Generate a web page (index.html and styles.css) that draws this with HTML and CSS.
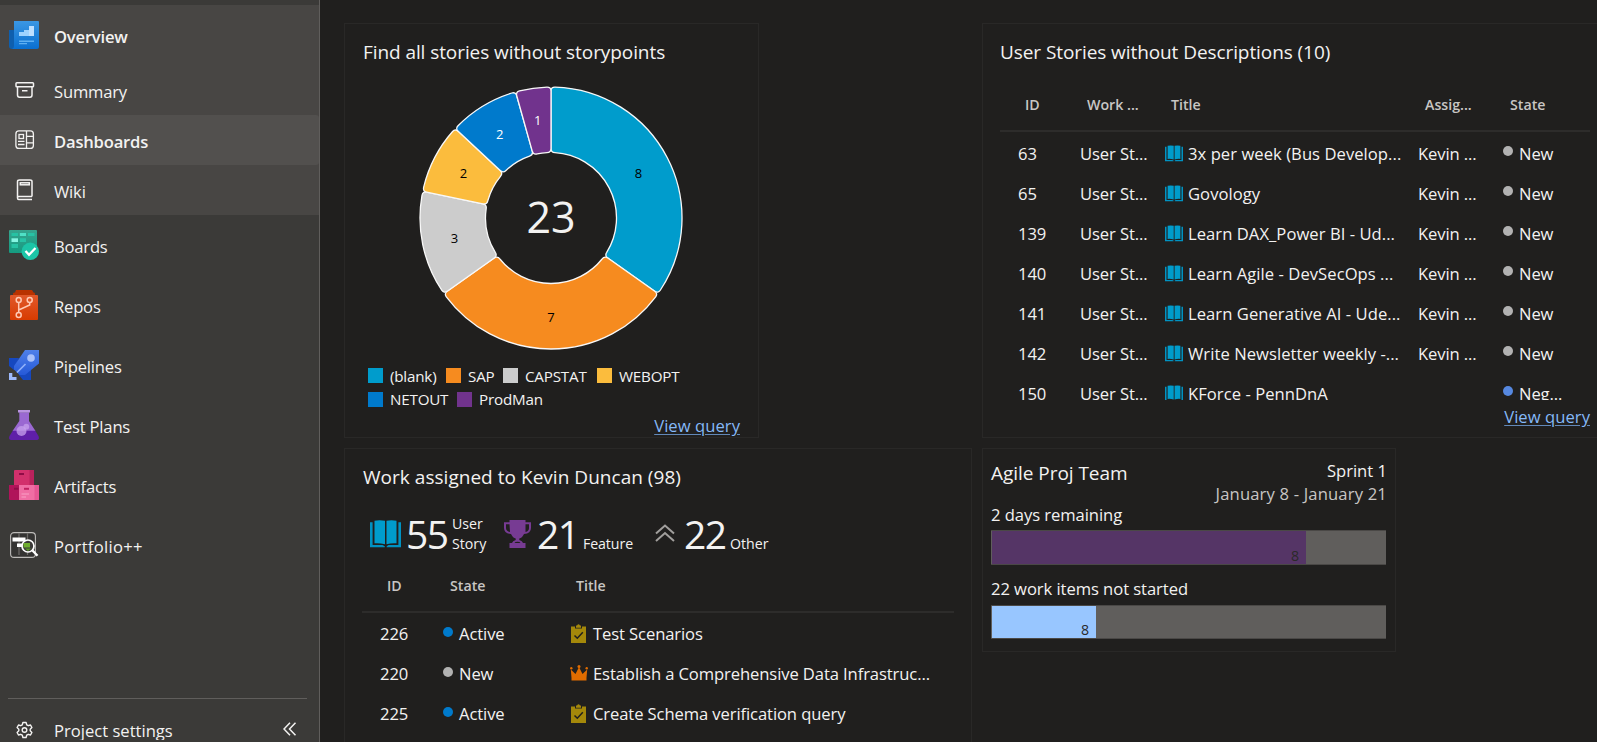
FILE: index.html
```html
<!DOCTYPE html>
<html lang="en">
<head>
<meta charset="utf-8">
<title>Dashboards</title>
<link rel="stylesheet" href="styles.css">
</head>
<body>
<svg width="0" height="0" class="defs">
  <defs>
    <linearGradient id="gBlue" x1="0" y1="0" x2="0" y2="1"><stop offset="0" stop-color="#3b97e3"/><stop offset="1" stop-color="#0a6fd0"/></linearGradient>
    <linearGradient id="gGreen" x1="0" y1="0" x2="0" y2="1"><stop offset="0" stop-color="#36a58e"/><stop offset="1" stop-color="#159a80"/></linearGradient>
    <linearGradient id="gRed" x1="0" y1="0" x2="0" y2="1"><stop offset="0" stop-color="#e0592b"/><stop offset="1" stop-color="#d83b01"/></linearGradient>
    <linearGradient id="gRocket" x1="0" y1="0" x2="0" y2="1"><stop offset="0" stop-color="#4f80ea"/><stop offset="1" stop-color="#2559d8"/></linearGradient>
    <symbol id="book" viewBox="0 0 31 28">
      <path d="M4.500 .8 Q9.500 -.3 15 .8 V24.300 Q9.500 22.800 4.500 23.300z M16.500 .8 Q21.500 -.3 26.500 .8 V23.300 Q21.500 22.800 16.500 24.300z" fill="#009ccc"/>
      <path d="M0 2.300 H2.600 V25 H12.500 L14.800 26.200 V27.300 H0z M31 2.300 H28.400 V25 H18.500 L16.700 26.200 V27.300 H31z" fill="#0092c2"/>
    </symbol>
    <symbol id="task" viewBox="0 0 15 19">
      <path d="M0 2.500 H4 V4.500 H11 V2.500 H15 V19 H0z" fill="#a4880a"/>
      <path d="M5 3.800 V1.500 H6 Q7.500 -1 9 1.500 H10 V3.800z" fill="#a4880a"/>
      <path d="M3.500 11.500 L6.300 14.200 L11.800 8.300" fill="none" stroke="#201f1e" stroke-width="1.500"/>
    </symbol>
    <symbol id="crown" viewBox="0 0 18 16">
      <path d="M1.500 15.500 V13 L.8 4.500 L5.500 9 L9 2 L12.500 9 L17.200 4.500 L16.500 13 V15.500z" fill="#e06c00"/>
      <circle cx="1.300" cy="3.300" r="1.200" fill="#e06c00"/><circle cx="9" cy="1.600" r="1.500" fill="#e06c00"/><circle cx="16.700" cy="3.300" r="1.200" fill="#e06c00"/>
    </symbol>
  </defs>
</svg>
<div class="app">
  <nav class="sidebar">
    <div class="group">
      <a class="item bold"><svg class="ico" viewBox="0 0 30 30"><path d="M0 10 H6 V29 H3 Q0 29 0 26z" fill="#0f5fae"/><path d="M5 1 H29 Q30 1 30 2 V27 Q30 29 28 29 H3 Q5 28.500 5 26z" fill="url(#gBlue)"/><path d="M10 12 H15 V10 H20 V6 H25 V16 H10z" fill="#9fd3ff"/><path d="M20 6 H25 V16 H20z" fill="#bfe0ff"/><path d="M10 20.500 H25 V22 H10z M10 23 H18 V24.300 H10z" fill="#5fb0f2"/></svg><span>Overview</span></a>
      <a class="item sub"><svg class="ico" viewBox="0 0 30 30"><g fill="none" stroke="#f3f2f1" stroke-width="1.500"><rect x="7" y="7.800" width="17.500" height="4" rx=".8"/><path d="M8.500 11.800 V20 Q8.500 22.200 10.500 22.200 H21 Q23 22.200 23 20 V11.800 M13 15.700 H18.500"/></g></svg><span>Summary</span></a>
      <a class="item sub bold on"><svg class="ico" viewBox="0 0 30 30"><g fill="none" stroke="#f3f2f1" stroke-width="1.300"><rect x="6.900" y="5.900" width="17.500" height="17.500" rx="3"/><path d="M17.500 6 V23 M17.500 11.300 H24 M17.500 17.800 H24 M9 16.300 H15.500 M9 19.500 H15.500"/><rect x="10" y="9.500" width="4.500" height="4"/></g></svg><span>Dashboards</span></a>
      <a class="item sub"><svg class="ico" viewBox="0 0 30 30"><g fill="none" stroke="#f3f2f1" stroke-width="1.500"><path d="M23 21.500 H9.700 Q8.500 21.500 8.500 23 Q8.500 24.500 9.700 24.500 H23 M8.500 23 V6.500 Q8.500 4.900 10.500 4.900 H21 Q23 4.900 23 6.500 V21.500"/><rect x="11.300" y="7.800" width="9" height="2"/></g></svg><span>Wiki</span></a>
    </div>
    <a class="item"><svg class="ico" viewBox="0 0 30 30"><path d="M0 1 Q0 0 1 0 H27 Q28 0 28 1 V23 H1 Q0 23 0 22z" fill="url(#gGreen)"/><path d="M2.500 3 H9 V6 H2.500z M19 3 H25.500 V6 H19z M10.800 8.300 H17 V12 H10.800z M2.500 14 H9 V18 H2.500z" fill="#27c2a4"/><path d="M10.800 3 H17 V6 H10.800z" fill="#4fe0c6"/><path d="M2.500 8.300 H9 V12 H2.500z" fill="#86f5e2"/><circle cx="21.300" cy="21.300" r="8.700" fill="#1cc5a7"/><path d="M16.500 21 L20 24.800 L26.500 18" fill="none" stroke="#fff" stroke-width="2.300"/></svg><span>Boards</span></a>
    <a class="item"><svg class="ico" viewBox="0 0 30 30"><path d="M4 5.500 V3.500 Q4 2.500 6 2.500 L7 0 H23 L24.500 2.500 Q26 2.500 26 3.500 V5.500z" fill="#b83200"/><path d="M1 6 Q1 5 2 5 H28 Q29 5 29 6 V29 Q29 30 28 30 H2 Q1 30 1 29z" fill="url(#gRed)"/><g fill="none" stroke="#ffc9b3" stroke-width="1.500"><circle cx="9.700" cy="10" r="2.500"/><circle cx="20.700" cy="10" r="2.500"/><path d="M9.700 12.700 V22.500 M20.700 12.700 V15 L9.700 20"/><circle cx="9.700" cy="25" r="2.500"/></g></svg><span>Repos</span></a>
    <a class="item"><svg class="ico" viewBox="0 0 30 30"><path d="M0 8 H10 L5 20 L0 16z M22 18 V30 H14 L10 25z" fill="#1648bf"/><path d="M16 0 H30 V13.500 L16 25 H10.500 L5 19.500 V16z" fill="url(#gRocket)"/><circle cx="22" cy="8" r="3.800" fill="#a9c1fb"/><path d="M8 22.500 L16.500 14" stroke="#8fb0fa" stroke-width="1.700"/><path d="M0 23 H3.300 V27 H7.500 V30 H0z" fill="#9db9fb"/></svg><span>Pipelines</span></a>
    <a class="item"><svg class="ico" viewBox="0 0 30 30"><path d="M10.300 2.300 H20 V11 L26.500 21 H3.500 L10.300 11z" fill="#9a68d2"/><path d="M3.800 20.700 H26.200 L29.500 26 Q31 30 27 30 H3 Q-1 30 .5 26z" fill="#5f1fa8"/><path d="M9 0 H21 V2.500 H9z" fill="#b993e0"/><circle cx="12.500" cy="21" r="5" fill="#c7a2ee" opacity=".75"/><circle cx="17.300" cy="16.700" r="2.900" fill="#c7a2ee" opacity=".75"/></svg><span>Test Plans</span></a>
    <a class="item"><svg class="ico" viewBox="0 0 30 30"><path d="M5 1 Q5 0 6 0 H24 Q25 0 25 1 V15 H5z" fill="#d2306c"/><path d="M20.500 0 H24 Q25 0 25 1 V15 H20.500z" fill="#b9225c"/><path d="M0 15 H10 V30 H1 Q0 30 0 29z" fill="#b0145a"/><path d="M10 15 H30 V29 Q30 30 29 30 H10z" fill="#f06ea4"/><path d="M25.500 15 H30 V29 Q30 30 29 30 H25.500z" fill="#e75794"/><path d="M10 3 H15 V5 H10z M5 17.800 H9.500 V19.800 H5z" fill="#8f0c46"/><path d="M15 17.800 H20 V19.800 H15z" fill="#c02060"/><path d="M12.500 24 H20 M12.500 27 H17" stroke="#f9a0c5"/></svg><span>Artifacts</span></a>
    <a class="item wide"><svg class="ico" viewBox="0 0 30 30"><rect x="1.600" y="2.600" width="24.800" height="24.800" rx="3.500" fill="#343332" stroke="#bdbbb9" stroke-width="1.100"/><path d="M10 3 V25 M18.500 3 V25" stroke="#6a6866" stroke-width="1.300"/><path d="M3.500 7.500 H16.500 V11.500 H3.500z M8 13.500 H14 V17 H8z" fill="#fff"/><circle cx="19" cy="16" r="6" fill="#3b3a39" stroke="#fff" stroke-width="1.700"/><path d="M14.500 13 H21 V17.500 H14.500z" fill="#6fae2e"/><path d="M16 18.500 H22 L19 21z" fill="#5a9a24"/><path d="M23.500 20.500 L28.500 25.800" stroke="#fff" stroke-width="2.400"/></svg><span>Portfolio++</span></a>
    <div class="foot">
      <svg class="ico" viewBox="0 0 30 30"><g fill="none" stroke="#f3f2f1" stroke-width="1.400" stroke-linejoin="round"><path d="M13.900 8.500 H17.100 L17.700 10.800 L19.300 11.700 L21.500 11 L22.900 13.500 L21.200 15.200 V16.800 L22.900 18.500 L21.500 21 L19.300 20.300 L17.700 21.200 L17.100 23.500 H13.900 L13.300 21.200 L11.700 20.300 L9.500 21 L8.100 18.500 L9.800 16.800 V15.200 L8.100 13.500 L9.500 11 L11.700 11.700 L13.300 10.800z"/><circle cx="15.500" cy="16" r="2.300"/></g></svg>
      <span>Project settings</span>
      <svg class="collapse" width="14" height="14" viewBox="0 0 14 14"><path d="M7 .8 L1 7 L7 13.200 M12.500 .8 L6.500 7 L12.500 13.200" fill="none" stroke="#f3f2f1" stroke-width="1.500"/></svg>
    </div>
  </nav>

  <main class="board">
    <div class="col">
      <section class="card chart">
        <h2>Find all stories without storypoints</h2>
        <svg class="donut" width="272" height="272" viewBox="-136 -136 272 272" id="donut"></svg>
        <div class="legend">
          <div><i class="c1"></i><b class="w1">(blank)</b><i class="c2"></i><b class="w2">SAP</b><i class="c3"></i><b class="w3">CAPSTAT</b><i class="c4"></i><b>WEBOPT</b></div>
          <div><i class="c5"></i><b class="w5">NETOUT</b><i class="c6"></i><b>ProdMan</b></div>
        </div>
        <a class="link">View query</a>
      </section>

      <section class="card work">
        <h2>Work assigned to Kevin Duncan (98)</h2>
        <div class="totals">
          <svg class="t-book" width="31" height="28"><use href="#book"/></svg><strong class="n1">55</strong><em class="l1">User<br>Story</em>
          <svg class="t-cup" width="27" height="28" viewBox="0 0 27 28"><path d="M5.500 0 H21.500 V2.300 H27 V8 Q27 13.500 20 14 Q18 18 15.300 18.500 V20 Q18.500 21 19 23 H21.500 V28 H5.500 V23 H8 Q8.500 21 11.700 20 V18.500 Q9 18 7 14 Q0 13.500 0 8 V2.300 H5.500z M5.500 4.300 H2 V8 Q2 11 6 12z M21.500 4.300 V12 Q25 11 25 8 V4.300z" fill="#773b93" fill-rule="evenodd"/><path d="M10.500 23 Q11 21.700 13.500 21.700 Q16 21.700 16.500 23z" fill="#201f1e"/></svg><strong class="n2">21</strong><em class="l2">Feature</em>
          <svg class="t-chev" width="20" height="18" viewBox="0 0 20 18"><path d="M1 9.500 L10 1.500 L19 9.500 M1 17 L10 9 L19 17" fill="none" stroke="#a19f9d" stroke-width="2"/></svg><strong class="n3">22</strong><em>Other</em>
        </div>
        <div class="grid g2">
          <div class="head"><span>ID</span><span>State</span><span>Title</span></div>
          <div class="row"><span>226</span><span><i class="dot act"></i>Active</span><span><svg class="wi" width="15" height="19"><use href="#task"/></svg>Test Scenarios</span></div>
          <div class="row"><span>220</span><span><i class="dot"></i>New</span><span><svg class="wi cr" width="18" height="16"><use href="#crown"/></svg>Establish a Comprehensive Data Infrastruc...</span></div>
          <div class="row"><span>225</span><span><i class="dot act"></i>Active</span><span><svg class="wi" width="15" height="19"><use href="#task"/></svg>Create Schema verification query</span></div>
        </div>
      </section>
    </div>

    <div class="col right">
      <section class="card stories">
        <h2>User Stories without Descriptions (10)</h2>
        <div class="grid g1">
          <div class="head"><span>ID</span><span>Work ...</span><span>Title</span><span>Assig...</span><span>State</span></div>
          <div class="row"><span>63</span><span>User St...</span><span><svg class="bk" width="18" height="17"><use href="#book"/></svg>3x per week (Bus Develop...</span><span>Kevin ...</span><span><i class="dot"></i>New</span></div>
          <div class="row"><span>65</span><span>User St...</span><span><svg class="bk" width="18" height="17"><use href="#book"/></svg>Govology</span><span>Kevin ...</span><span><i class="dot"></i>New</span></div>
          <div class="row"><span>139</span><span>User St...</span><span><svg class="bk" width="18" height="17"><use href="#book"/></svg>Learn DAX_Power BI - Ud...</span><span>Kevin ...</span><span><i class="dot"></i>New</span></div>
          <div class="row"><span>140</span><span>User St...</span><span><svg class="bk" width="18" height="17"><use href="#book"/></svg>Learn Agile - DevSecOps ...</span><span>Kevin ...</span><span><i class="dot"></i>New</span></div>
          <div class="row"><span>141</span><span>User St...</span><span><svg class="bk" width="18" height="17"><use href="#book"/></svg>Learn Generative AI - Ude...</span><span>Kevin ...</span><span><i class="dot"></i>New</span></div>
          <div class="row"><span>142</span><span>User St...</span><span><svg class="bk" width="18" height="17"><use href="#book"/></svg>Write Newsletter weekly -...</span><span>Kevin ...</span><span><i class="dot"></i>New</span></div>
          <div class="row"><span>150</span><span>User St...</span><span><svg class="bk" width="18" height="17"><use href="#book"/></svg>KForce - PennDnA</span><span></span><span><i class="dot neg"></i>Neg...</span></div>
        </div>
        <a class="link">View query</a>
      </section>

      <section class="card sprint">
        <div class="top"><h2>Agile Proj Team</h2><p>Sprint 1<br><small>January 8 - January 21</small></p></div>
        <p class="cap">2 days remaining</p>
        <div class="bar"><div class="fill days" style="width:314px">8</div></div>
        <p class="cap second">22 work items not started</p>
        <div class="bar low"><div class="fill items" style="width:104px">8</div></div>
      </section>
    </div>
  </main>
</div>
<script src="chart.js"></script>
</body>
</html>
```
FILE: styles.css
```css
* { box-sizing: border-box; }
body { margin: 0; background: #201f1e; color: #f3f2f1; font-family: "Open Sans", "Noto Sans", sans-serif; font-size: 16.6px; overflow: hidden; }
h2, p { margin: 0; font-weight: 400; }
i, em, b { font-style: normal; font-weight: 400; }
.defs { position: absolute; }
.app { display: flex; height: 742px; overflow: hidden; }

.sidebar { width: 320px; flex: none; background: #3b3a38; border-right: 1px solid #605e5c; padding-top: 5px; display: flex; flex-direction: column; }
.group { background: #484644; }
.item { display: flex; align-items: center; height: 60px; padding-left: 9px; gap: 15px; letter-spacing: -.2px; }
.item span { padding-top: 3px; }
.ico { width: 30px; height: 30px; flex: none; }
.sub { height: 50px; }
.bold { font-weight: 600; letter-spacing: -.2px; }
.wide { letter-spacing: .3px; }
.on { background: #52504e; border-radius: 0 3px 3px 0; }
.foot { margin: auto 12px 0 8px; height: 44px; border-top: 1px solid #605e5c; padding: 14px 10px 0 1px; display: flex; gap: 15px; letter-spacing: 0; }
.foot .ico { margin-top: 1px; }
.foot span { flex: 1; height: 27px; line-height: 35px; overflow: hidden; }
.foot .collapse { margin-top: 9px; }

.board { flex: 1; display: flex; gap: 10px; padding: 23px 0 0 24px; min-width: 0; }
.col { width: 628px; flex: none; display: flex; flex-direction: column; gap: 10px; }
.card { border: 1px solid #292827; position: relative; background: #201f1e; }
h2 { font-size: 19px; line-height: 26px; letter-spacing: -.04px; white-space: nowrap; }
.chart { width: 415px; height: 415px; padding: 15px 18px 11px 17px; display: flex; flex-direction: column; }
.chart h2, .work h2 { padding-left: 1px; }
.chart h2 { letter-spacing: -.08px; }
.work h2 { letter-spacing: .03px; }
.stories h2 { letter-spacing: -.08px; }
.donut { margin: 17px 0 0 53px; flex: none; }
.donut .slice { stroke: #f8f8f8; stroke-width: 1.300; }
.donut text { font-size: 13px; text-anchor: middle; }
.donut .total { font-size: 43px; fill: #f3f2f1; }
.legend { margin: 10px 0 0 6px; font-size: 15.200px; letter-spacing: -.2px; }
.legend div { display: flex; align-items: center; height: 23.500px; }
.legend i { width: 15px; height: 15px; margin-right: 7px; }
.c1 { background: #009ccc; } .c2 { background: #f68b1f; } .c3 { background: #ccc; } .c4 { background: #fbbc3d; } .c5 { background: #007acc; } .c6 { background: #71338d; }
.w1 { width: 56px; } .w2 { width: 35px; } .w3 { width: 72px; } .w5 { width: 67px; }
.link { color: #85b9f8; text-decoration: underline; text-decoration-color: #6288b8; text-underline-offset: 2px; align-self: flex-end; line-height: 24px; letter-spacing: .05px; }
.chart .link { margin-top: 3px; }

.work { height: 420px; padding: 15px 17px; }
.totals { display: flex; height: 45px; margin-top: 24px; padding-left: 8px; }
.totals svg { flex: none; margin-top: 6px; }
.totals strong { font-weight: 400; font-size: 39px; line-height: 54px; margin-top: -7px; letter-spacing: -1.500px; }
.totals em { font-size: 14.200px; line-height: 20px; align-self: flex-start; margin-top: 20px; }
.totals .l1 { margin-top: 0; width: 52px; }
.totals .l2 { width: 72px; letter-spacing: -.1px; }
.totals .n1 { width: 46px; margin-left: 5px; } .totals .n2 { width: 46px; margin-left: 6px; } .totals .n3 { width: 46px; margin-left: 9px; }
.totals .t-chev { margin-top: 10px; }

.grid { display: grid; align-content: start; }
.head, .row { display: grid; align-items: center; height: 40px; white-space: nowrap; letter-spacing: -.1px; }
.head { font-size: 14.200px; font-weight: 600; color: #c8c6c4; height: 53px; border-bottom: 2px solid #2d2c2b; letter-spacing: 0; }
.head span { padding-left: 7px; }
.row > span { display: flex; align-items: center; height: 24px; }
.g1 .head, .g1 .row { grid-template-columns: 62px 84px 254px 85px 1fr; padding-left: 18px; }
.g1 .head { margin-bottom: 1px; }
.g1 .row > span:nth-child(3) { letter-spacing: .05px; }
.g2 { margin-top: 1px; }
.g2 .head, .g2 .row { grid-template-columns: 63px 126px 1fr; padding-left: 18px; }
.dot { width: 10px; height: 10px; border-radius: 50%; background: #b2b2b2; margin: -4px 6px 0 0; }
.g2 .dot { margin-top: -3px; }
.act { background: #007acc; }
.neg { background: #5688e0; }
.bk { margin: 0 5px 0 1px; }
.wi { margin: 0 7px 0 2px; }
.wi.cr { margin: 0 5px 0 1px; }

.stories { height: 415px; padding: 15px 17px; }
.stories .grid { margin-top: 14px; height: 321px; width: 590px; overflow: hidden; }
.stories .link { display: block; width: 590px; text-align: right; margin-top: 5px; }

.sprint { width: 414px; height: 204px; padding: 7px 8px; }
.top { display: flex; justify-content: space-between; height: 48px; }
.top h2 { padding-top: 4px; }
.top p { text-align: right; line-height: 23px; letter-spacing: 0; padding-top: 3px; }
.top small { font-size: inherit; color: #c8c6c4; letter-spacing: .17px; }
.cap { line-height: 22px; letter-spacing: -.06px; }
.bar { height: 35px; margin-top: 4px; background: #605e5c; border: solid #4a4846; border-width: 1px 0; width: 395px; }
.low { height: 34px; margin-top: 5px; }
.fill { height: 100%; margin-left: 1px; font-size: 14.200px; text-align: right; padding: 14px 7px 0 0; line-height: 22px; color: #2b2a29; overflow: hidden; }
.low .fill { padding-top: 13px; }
.days { background: #553566; }
.items { background: #98c6ff; }
.second { margin-top: 13px; }
```
FILE: chart.js
```js
const slices = [
  [8, '#009ccc', '#000'], [7, '#f68b1f', '#000'], [3, '#cccccc', '#000'],
  [2, '#fbbc3d', '#000'], [2, '#007acc', '#fff'], [1, '#71338d', '#fff']
];
const R = 131, r = 65.5, corner = 4;
const total = slices.reduce((sum, s) => sum + s[0], 0);
const pt = (rad, a) => `${(rad * Math.sin(a)).toFixed(2)} ${(-rad * Math.cos(a)).toFixed(2)}`;
let start = 0, out = '';
for (const [value, fill, ink] of slices) {
  const a = start, b = start + value / total * 2 * Math.PI;
  const o = corner / R, i = corner / r;
  const d = `M${pt(R - corner, a)} Q${pt(R, a)} ${pt(R, a + o)} A${R} ${R} 0 0 1 ${pt(R, b - o)} Q${pt(R, b)} ${pt(R - corner, b)}` +
    ` L${pt(r + corner, b)} Q${pt(r, b)} ${pt(r, b - i)} A${r} ${r} 0 0 0 ${pt(r, a + i)} Q${pt(r, a)} ${pt(r + corner, a)}Z`;
  const m = (a + b) / 2, t = 98.5;
  out += `<path class="slice" d="${d}" fill="${fill}"/><text x="${t * Math.sin(m)}" y="${-t * Math.cos(m) + 5}" fill="${ink}">${value}</text>`;
  start = b;
}
out += `<text class="total" y="15">${total}</text>`;
document.getElementById('donut').innerHTML = out;
```
